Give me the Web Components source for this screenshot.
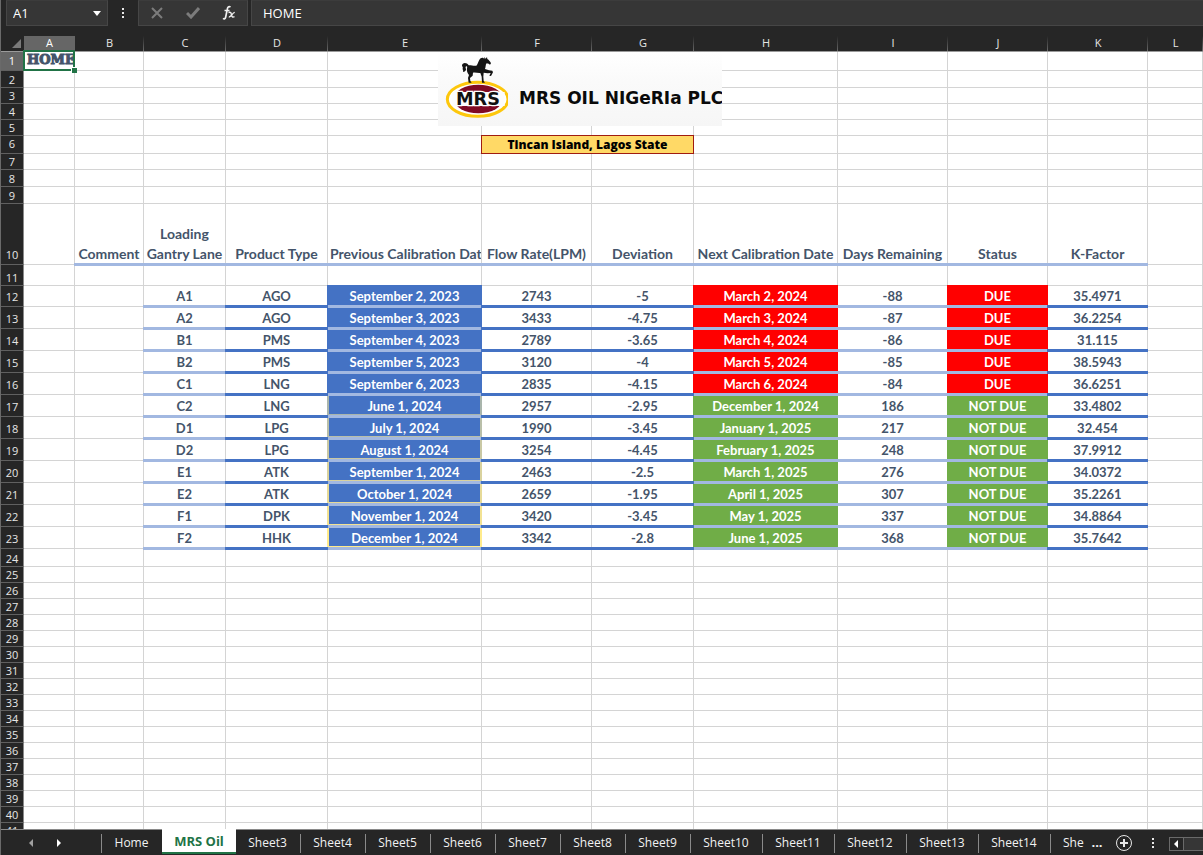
<!DOCTYPE html>
<html lang="en">
<head>
<meta charset="utf-8">
<title>MRS Oil</title>
<style>
  html, body { margin: 0; height: 100%; }
  body { background: #262626; font-family: "Open Sans", "Noto Sans", sans-serif; overflow: hidden; }
</style>
</head>
<body>
<work-book>
  <formula-bar cell="A1" value="HOME"></formula-bar>
  <sheet-grid><mrs-logo slot="picture"></mrs-logo></sheet-grid>
  <sheet-tabs>
    <sheet-tab class="home">Home</sheet-tab>
    <sheet-tab active>MRS Oil</sheet-tab>
    <sheet-tab>Sheet3</sheet-tab>
    <sheet-tab>Sheet4</sheet-tab>
    <sheet-tab>Sheet5</sheet-tab>
    <sheet-tab>Sheet6</sheet-tab>
    <sheet-tab>Sheet7</sheet-tab>
    <sheet-tab>Sheet8</sheet-tab>
    <sheet-tab>Sheet9</sheet-tab>
    <sheet-tab wide>Sheet10</sheet-tab>
    <sheet-tab wide>Sheet11</sheet-tab>
    <sheet-tab wide>Sheet12</sheet-tab>
    <sheet-tab wide>Sheet13</sheet-tab>
    <sheet-tab wide>Sheet14</sheet-tab>
    <sheet-tab cut>She</sheet-tab>
  </sheet-tabs>
</work-book>

<script>
const define = (name, html, setup) => customElements.define(name, class extends HTMLElement {
  connectedCallback() {
    if (this.shadowRoot) return;
    const root = this.attachShadow({ mode: 'open' });
    const t = document.createElement('template');
    t.innerHTML = html;
    root.append(t.content.cloneNode(true));
    if (setup) setup(this, root);
  }
});

define('work-book', `
<style>
  :host { display: flex; flex-direction: column; height: 100vh; box-sizing: border-box; border-left: 1px solid #6a6a6a; background: #262626; }
</style>
<slot></slot>`);

define('formula-bar', `
<style>
  :host { display: flex; align-items: flex-start; height: 36px; flex: none; padding-left: 5px; box-sizing: border-box; color: #fff; }
  .box { display: flex; align-items: center; height: 26px; box-sizing: border-box; background: #363636; border: 1px solid #464646; border-top-color: #3c3c3c; }
  .name { width: 102px; }
  .tools { width: 110px; justify-content: space-around; }
  .value { flex: 1; margin-left: 3px; border-right: 0; }
  input { font: 13px "Open Sans", "Noto Sans", sans-serif; color: #fff; background: none; border: 0; outline: 0; min-width: 0; flex: 1; height: 24px; padding: 0; }
  .name input { padding-left: 6px; }
  .value input { padding-left: 11px; }
  button { background: none; border: 0; padding: 0; color: inherit; display: flex; align-items: center; justify-content: center; width: 20px; height: 24px; }
  .dots { width: 30px; height: 26px; }
</style>
<div class="box name"><input aria-label="Name Box"><button aria-label="Names"><svg width="8" height="5"><path d="M0 0h8L4 5z" fill="#fff"/></svg></button></div>
<button class="dots" aria-label="Resize"><svg width="3" height="12" fill="#e8e8e8"><path d="M0 1h2v2H0zM0 5h2v2H0zM0 9h2v2H0z"/></svg></button>
<div class="box tools">
  <button aria-label="Cancel"><svg width="12" height="12"><path d="M1 1l10 10M11 1L1 11" stroke="#7c7c7c" stroke-width="2"/></svg></button>
  <button aria-label="Enter"><svg width="14" height="12"><path d="M1 6l4 4L13 1" fill="none" stroke="#7c7c7c" stroke-width="3"/></svg></button>
  <button aria-label="Insert Function"><svg width="14" height="16" fill="none" stroke="#f0f0f0"><path d="M8.500 2.200C6.800.8 5.700 2 5.300 4.200L3.700 12c-.4 1.800-1.500 2.300-2.700 1.400" stroke-width="1.700"/><path d="M2.500 5.500h5M6.500 7.500c2.500-.8 2.500.5 3 2.500s1 2.600 3 1.700M12.800 7.400c-2.300-.2-3.500 4.900-6 4.600" stroke-width="1.400"/></svg></button>
</div>
<div class="box value"><input aria-label="Formula"></div>`,
(el, root) => {
  const [name, value] = root.querySelectorAll('input');
  name.value = el.getAttribute('cell');
  value.value = el.getAttribute('value');
});

define('mrs-logo', `
<style>
  :host { display: flex; width: 284px; height: 74px; overflow: hidden; background: linear-gradient(#fff, #fafafa 40%, #f6f6f6); }
  svg { flex: none; }
  span { font: bold 17px/20px "DejaVu Sans", sans-serif; color: #0a0a0a; white-space: nowrap; margin: 36px 0 0 11px; }
</style>
<svg width="70" height="74" viewBox="-6 6 210 222">
  <ellipse cx="113" cy="148" rx="91" ry="51" fill="#fff" stroke="#fdc70c" stroke-width="9"/>
  <ellipse cx="115" cy="147" rx="73" ry="43" fill="#800a24"/>
  <path d="M36 126H194V168H36z" fill="#fdfdfd"/>
  <text x="114" y="166" font-family="DejaVu Sans, sans-serif" font-weight="bold" font-size="53" text-anchor="middle" fill="#111" stroke="#fdfdfd" stroke-width="8" paint-order="stroke">MRS</text>
  <g fill="#151515">
    <path d="M84 46C92 44 100 49 109 47C115 43 115 30 122 25C127 21 130 24 133 26L133 21L137 26L141 21L142 27C147 30 151 35 153 40L150 44L146 41L140 40C136 44 138 50 135 57L147 61L157 62L159 67L153 78L148 77L152 69L143 70L131 68L130 80L131 93L135 98H126L125 80L121 69C113 70 106 66 99 68L98 77L90 84L91 93L95 98H86L84 84L87 75C81 68 78 58 84 46Z"/>
    <path d="M86 46C80 36 66 38 66 47C66 50 70 50 68 55C67 60 71 60 69 66C77 65 80 59 77 54C76 48 79 46 84 53Z"/>
  </g>
</svg>
<span>MRS OIL NIGeRIa PLC</span>`);

define('sheet-grid', `
<style>
  :host { display: block; flex: 1; min-height: 0; overflow: hidden; position: relative; background: #fff; }
  table { width: 100%; table-layout: fixed; border-collapse: separate; border-spacing: 0; }
  th, td { padding: 0; box-sizing: border-box; }
  thead th { height: 16px; background: linear-gradient(#262626, #6a6a6a) right / 1px 15px no-repeat #262626; border-bottom: 1px solid #9a9a9a; color: #e6e6e6; font-size: 11px; font-weight: 400; line-height: 14px; vertical-align: top; }
  thead th.on, tbody th.on { background: #666; color: #fff; }
  thead th:first-child { text-align: right; line-height: 0; vertical-align: bottom; background: #262626; }
  thead svg { margin: 0 3px 3px 0; }
  tbody th { background: #262626; border-right: 1px solid #8a8a8a; border-bottom: 1px solid #606060; color: #e6e6e6; font-size: 11px; font-weight: 400; line-height: 15px; vertical-align: bottom; }
  .data > th, .tall > th { padding-bottom: 2px; }
  .tall > th { line-height: 14px; }
  td { border-right: 1px solid #d4d4d4; border-bottom: 1px solid #d4d4d4; color: #44546a; font: bold 13px/18px Lato, Carlito, sans-serif; text-align: center; vertical-align: bottom; position: relative; white-space: nowrap; }
  .data td { padding-bottom: 1px; }
  .light::after, .dark::after { content: ""; position: absolute; z-index: 1; left: -1px; right: -1px; bottom: -2px; height: 3px; background: #a2b8e1; }
  .dark::after { z-index: 2; background: #4472c4; }
  .fill { color: #fff; background: var(--fill); border-color: var(--fill); box-shadow: -1px 0 var(--fill), 0 -1px var(--fill), -1px -1px var(--fill); }
  .bar::before { content: ""; position: absolute; z-index: 1; top: 1px; left: -1px; right: -1px; bottom: 1px; border: solid var(--bar); border-width: 0 2px 1px; }
  .clip { display: block; overflow: hidden; padding-left: 2px; text-align: left; }
  .head td { font-size: 14px; line-height: 20px; padding-bottom: 0; }
  .a1 { vertical-align: top; }
  a { display: block; font: 900 13px/16px "DejaVu Serif", serif; color: #44546a; -webkit-text-stroke: 1px #44546a; text-decoration: none; text-align: left; padding-left: 3px; overflow: hidden; }
  .a1::after { content: ""; position: absolute; z-index: 2; inset: -2px -1px -1px -1px; border: 2px solid #217346; }
  .a1::before { content: ""; position: absolute; z-index: 3; right: -3px; bottom: -3px; width: 5px; height: 5px; background: #217346; border: solid #fff; border-width: 1px 0 0 1px; }
  .title { font: 800 12px/17px "Open Sans", sans-serif; color: #000; background: #ffd966; border-color: #a01c10; box-shadow: -1px 0 #a01c10, 0 -1px #a01c10, -1px -1px #a01c10; }
  ::slotted(mrs-logo) { position: absolute; left: 437px; top: 16px; z-index: 2; }
</style>
<table>
  <colgroup></colgroup>
  <thead><tr></tr></thead>
  <tbody></tbody>
</table>
<slot name="picture"></slot>`,
(el, root) => {
  const widths = [23, 51, 69, 82, 102, 154, 110, 102, 144, 110, 100, 100];
  root.querySelector('colgroup').innerHTML = widths.map(w => `<col style="width:${w}px">`).join('') + '<col>';
  root.querySelector('thead tr').innerHTML =
    '<th aria-label="Select all"><svg width="9" height="9"><path d="M9 0V9H0z" fill="#7a7a7a"/></svg></th>' +
    [...'ABCDEFGHIJKL'].map(c => `<th scope="col"${c === 'A' ? ' class="on"' : ''}>${c}</th>`).join('');

  const heights = [19, 17, 16, 16, 16, 18, 16, 17, 17, 61, 21, 21];
  const heightOf = n => n <= 12 ? heights[n - 1] : n <= 23 ? 22 : n === 24 ? 18 : 16;
  const heads = ['Comment', 'Loading<br>Gantry Lane', 'Product Type', '<span class="clip">Previous Calibration Date</span>', 'Flow Rate(LPM)', 'Deviation', 'Next Calibration Date', 'Days Remaining', 'Status', 'K-Factor'];
  const rows = [
    ['A1', 'AGO', 'September 2, 2023', '2743', '-5', 'March 2, 2024', '-88', 'DUE', '35.4971'],
    ['A2', 'AGO', 'September 3, 2023', '3433', '-4.75', 'March 3, 2024', '-87', 'DUE', '36.2254'],
    ['B1', 'PMS', 'September 4, 2023', '2789', '-3.65', 'March 4, 2024', '-86', 'DUE', '31.115'],
    ['B2', 'PMS', 'September 5, 2023', '3120', '-4', 'March 5, 2024', '-85', 'DUE', '38.5943'],
    ['C1', 'LNG', 'September 6, 2023', '2835', '-4.15', 'March 6, 2024', '-84', 'DUE', '36.6251'],
    ['C2', 'LNG', 'June 1, 2024', '2957', '-2.95', 'December 1, 2024', '186', 'NOT DUE', '33.4802'],
    ['D1', 'LPG', 'July 1, 2024', '1990', '-3.45', 'January 1, 2025', '217', 'NOT DUE', '32.454'],
    ['D2', 'LPG', 'August 1, 2024', '3254', '-4.45', 'February 1, 2025', '248', 'NOT DUE', '37.9912'],
    ['E1', 'ATK', 'September 1, 2024', '2463', '-2.5', 'March 1, 2025', '276', 'NOT DUE', '34.0372'],
    ['E2', 'ATK', 'October 1, 2024', '2659', '-1.95', 'April 1, 2025', '307', 'NOT DUE', '35.2261'],
    ['F1', 'DPK', 'November 1, 2024', '3420', '-3.45', 'May 1, 2025', '337', 'NOT DUE', '34.8864'],
    ['F2', 'HHK', 'December 1, 2024', '3342', '-2.8', 'June 1, 2025', '368', 'NOT DUE', '35.7642']
  ];
  const bars = ['#a9b5ac', '#b9bfa9', '#c9c8a4', '#d9d29e', '#e6da98', '#f2e293', '#ffeb8c'];
  const lines = ['light', 'dark', 'light', 'dark', 'dark', 'light', 'light', 'light', 'dark'];
  const blank = n => '<td></td>'.repeat(n);

  const cells = n => {
    if (n === 1) return '<td class="a1"><a href="#home">HOME</a></td>' + blank(11);
    if (n === 6) return blank(5) + '<td colspan="2" class="title">Tincan Island, Lagos State</td>' + blank(5);
    if (n === 10) return blank(1) + heads.map(h => `<td class="light">${h}</td>`).join('') + blank(1);
    if (n >= 12 && n <= 23) {
      const row = rows[n - 12];
      const state = row[7] === 'DUE' ? '#f00' : '#70ad47';
      return blank(2) + row.map((v, i) => {
        const fill = i === 2 ? '#4472c4' : i === 5 || i === 7 ? state : '';
        const bar = i === 2 && n > 16 ? bars[n - 17] : '';
        return `<td class="${lines[i]}${fill && ' fill'}${bar && ' bar'}" style="${fill && `--fill:${fill};`}${bar && `--bar:${bar}`}">${v}</td>`;
      }).join('') + blank(1);
    }
    return blank(12);
  };
  let html = '';
  for (let n = 1; n <= 41; n++) {
    const cls = n === 10 ? 'data head' : n > 11 && n < 24 ? 'data' : n === 1 || n === 6 ? 'tall' : '';
    html += `<tr class="${cls}" style="height:${heightOf(n)}px"><th scope="row"${n === 1 ? ' class="on"' : ''}>${n}</th>${cells(n)}</tr>`;
  }
  root.querySelector('tbody').innerHTML = html;
});

define('sheet-tab', `
<style>
  :host { display: block; flex: 0 0 65px; height: 25px; }
  :host(.home) { flex-basis: 61px; }
  :host([wide]) { flex-basis: 72px; }
  :host([cut]) { flex-basis: 34px; overflow: hidden; }
  :host([active]) { flex-basis: 74px; margin-right: -1px; z-index: 1; }
  button { display: block; width: 100%; height: 25px; padding: 0; border: 0; color: #f2f2f2; font: 12px/25px "Open Sans", "Noto Sans", sans-serif; background: linear-gradient(#8a8a8a, #8a8a8a) 0 4px / 1px 19px no-repeat; text-align: center; white-space: nowrap; }
  :host([cut]) button { text-align: left; padding-left: 13px; }
  :host([active]) button { margin-top: -1px; background: #fff; border-bottom: 2px solid #217346; color: #217346; font-size: 13px; font-weight: 700; }
</style>
<button role="tab"><slot></slot></button>`);

define('sheet-tabs', `
<style>
  :host { display: flex; flex: none; height: 26px; box-sizing: border-box; border-top: 1px solid #8a8a8a; background: #262626; color: #f2f2f2; }
  .nav { flex: 0 0 100px; display: flex; padding-left: 20px; gap: 8px; box-sizing: border-box; }
  .tabs { flex: 1; display: flex; min-width: 0; clip-path: inset(-1px 0 0 0); }
  .end { flex: 0 0 119px; display: flex; align-items: center; }
  button { background: none; border: 0; padding: 0; color: inherit; display: flex; align-items: center; justify-content: center; width: 20px; height: 26px; }
  .more { width: 26px; font: bold 13px/20px "Open Sans", sans-serif; padding-bottom: 2px; }
  .add { width: 28px; }
  .grip { width: 31px; }
  .scroll { flex: 1; display: flex; height: 14px; border: 1px solid #6a6a6a; border-right: 0; margin-top: 2px; background: #363636; box-sizing: border-box; }
  .scroll button { width: 13px; height: 12px; background: #262626; border-right: 1px solid #6a6a6a; box-sizing: content-box; }
</style>
<div class="nav">
  <button aria-label="Previous sheets"><svg width="5" height="8"><path d="M4 0v8L0 4z" fill="#a0a0a0"/></svg></button>
  <button aria-label="Next sheets"><svg width="5" height="8"><path d="M0 0v8L4 4z" fill="#fff"/></svg></button>
</div>
<div class="tabs" role="tablist"><slot></slot></div>
<div class="end">
  <button class="more" aria-label="More sheets">...</button>
  <button class="add" aria-label="New sheet"><svg width="18" height="18" fill="none" stroke="#e8e8e8"><circle cx="9" cy="9" r="7.500"/><path d="M9 5v8M5 9h8" stroke-width="2"/></svg></button>
  <button class="grip" aria-label="Resize tabs"><svg width="3" height="12" fill="#e8e8e8"><path d="M0 1h2v2H0zM0 5h2v2H0zM0 9h2v2H0z"/></svg></button>
  <div class="scroll"><button aria-label="Scroll left"><svg width="5" height="8"><path d="M4 0v8L0 4z" fill="#fff"/></svg></button></div>
</div>`);
</script>
</body>
</html>
